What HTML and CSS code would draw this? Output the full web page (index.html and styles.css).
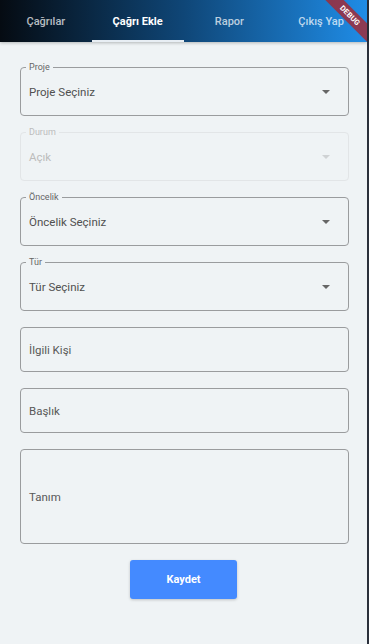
FILE: index.html
```html
<!DOCTYPE html>
<html lang="tr">
<head>
    <meta charset="UTF-8">
    <meta name="viewport" content="width=device-width, initial-scale=1.0">
    <title>Çağrı Ekle</title>
    <link rel="stylesheet" href="styles.css">
</head>
<body>
    <div class="app">
        <header class="appbar">
            <nav class="tabs">
                <a href="#" class="tab">Çağrılar</a>
                <a href="#" class="tab active">Çağrı Ekle</a>
                <a href="#" class="tab">Rapor</a>
                <a href="#" class="tab">Çıkış Yap</a>
            </nav>
            <div class="debug"><span>DEBUG</span></div>
        </header>

        <main class="form">
            <div class="field select">
                <span class="label">Proje</span>
                <span class="value">Proje Seçiniz</span>
                <span class="arrow"></span>
            </div>
            <div class="field select disabled">
                <span class="label">Durum</span>
                <span class="value">Açık</span>
                <span class="arrow"></span>
            </div>
            <div class="field select">
                <span class="label">Öncelik</span>
                <span class="value">Öncelik Seçiniz</span>
                <span class="arrow"></span>
            </div>
            <div class="field select">
                <span class="label">Tür</span>
                <span class="value">Tür Seçiniz</span>
                <span class="arrow"></span>
            </div>
            <div class="field text">
                <span class="hint">İlgili Kişi</span>
            </div>
            <div class="field text">
                <span class="hint">Başlık</span>
            </div>
            <div class="field text area">
                <span class="hint">Tanım</span>
            </div>
            <div class="actions">
                <button class="save">Kaydet</button>
            </div>
        </main>
    </div>
</body>
</html>
```

FILE: styles.css
```css
* {
    box-sizing: border-box;
}

body {
    margin: 0;
    font-family: Roboto, "Noto Sans", Arial, sans-serif;
    background: #eff3f5;
    color: #444;
}

.app {
    width: 369px;
    min-height: 644px;
    border-right: 2px solid #2b303b;
    background: #eff3f5;
}

.appbar {
    position: relative;
    height: 42px;
    background: linear-gradient(to right, #050b12, #0f4677 50%, #1f8ce6);
    box-shadow: 0 1px 3px rgba(0, 0, 0, 0.25);
    overflow: hidden;
}

.tabs {
    display: flex;
    height: 42px;
}

.tab {
    flex: 1;
    display: flex;
    align-items: center;
    justify-content: center;
    color: rgba(255, 255, 255, 0.72);
    text-decoration: none;
    font-size: 11px;
    font-weight: 500;
    border-bottom: 2px solid transparent;
    padding-top: 2px;
}

.tab.active {
    color: #fff;
    font-weight: 700;
    border-bottom-color: #e8eef4;
}

.debug {
    position: absolute;
    top: 0;
    right: 0;
    width: 55px;
    height: 55px;
    overflow: hidden;
    pointer-events: none;
}

.debug span {
    position: absolute;
    top: 9px;
    left: -12px;
    width: 100px;
    height: 13px;
    line-height: 13px;
    transform: rotate(45deg);
    background: rgba(183, 28, 28, 0.72);
    color: #fff;
    font-size: 7.5px;
    font-weight: 700;
    text-align: center;
    letter-spacing: 0.2px;
}

.form {
    padding: 25px 18px 40px 20px;
    display: flex;
    flex-direction: column;
    gap: 16px;
}

.field {
    position: relative;
    display: flex;
    align-items: center;
    border: 1px solid #9a9c9e;
    border-radius: 4px;
    padding: 0 8px;
    font-size: 11.5px;
}

.field.select {
    height: 49px;
}

.field.text {
    height: 45px;
}

.field.area {
    height: 95px;
}

.label {
    position: absolute;
    top: -7px;
    left: 5px;
    padding: 0 3px;
    background: #eff3f5;
    font-size: 9px;
    line-height: 12px;
    color: #666;
}

.value {
    flex: 1;
    color: #505050;
}

.hint {
    color: #585858;
}

.arrow {
    width: 0;
    height: 0;
    margin-right: 10px;
    border-left: 4px solid transparent;
    border-right: 4px solid transparent;
    border-top: 4px solid #666;
}

.field.disabled {
    border-color: #e2e5e7;
}

.field.disabled .label,
.field.disabled .value {
    color: #bcbcbc;
}

.field.disabled .arrow {
    border-top-color: #cfd2d4;
}

.actions {
    display: flex;
    justify-content: center;
    padding-right: 2px;
}

.save {
    width: 107px;
    height: 39px;
    border: none;
    border-radius: 3px;
    background: #448aff;
    color: #fff;
    font-family: inherit;
    font-size: 11px;
    font-weight: 700;
    box-shadow: 0 1px 3px rgba(0, 0, 0, 0.2);
    cursor: pointer;
}
```
